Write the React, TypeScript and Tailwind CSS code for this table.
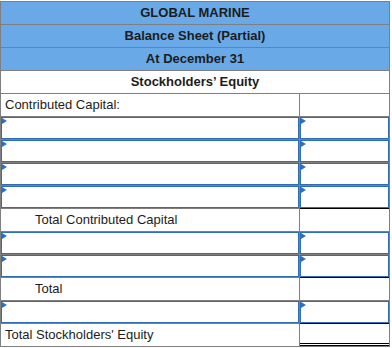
import React from "react";

type Row =
  | { kind: "label"; text: string; indent?: boolean; under?: "double" }
  | { kind: "input"; rule?: boolean };

const HEADERS = ["GLOBAL MARINE", "Balance Sheet (Partial)", "At December 31"];

const ROWS: Row[] = [
  { kind: "label", text: "Contributed Capital:" },
  { kind: "input" },
  { kind: "input" },
  { kind: "input" },
  { kind: "input", rule: true },
  { kind: "label", text: "Total Contributed Capital", indent: true },
  { kind: "input" },
  { kind: "input", rule: true },
  { kind: "label", text: "Total", indent: true },
  { kind: "input", rule: true },
  { kind: "label", text: "Total Stockholders' Equity", under: "double" },
];

function InputBox() {
  return (
    <div className="relative h-full w-full border border-[#2f6db6] bg-white">
      <svg className="absolute left-0 top-0" width="5" height="6" viewBox="0 0 5 6" aria-hidden="true">
        <path d="M0 0L5 3L0 6Z" fill="#2f6fc0" />
      </svg>
    </div>
  );
}

export default function App() {
  return (
    <div className="pt-px font-['Liberation_Sans',Arial,sans-serif] text-[13px] text-[#1c1c1c]">
      <div className="w-[390px] border-x border-t border-[#7f7f7f]">
        {HEADERS.map((h) => (
          <div
            key={h}
            className="flex h-[23px] items-center justify-center border-b border-[#7f7f7f] bg-[#69a9e7] font-bold"
          >
            {h}
          </div>
        ))}
        <div className="flex h-[23px] items-center justify-center border-b border-[#7f7f7f] bg-white font-bold">
          Stockholders’ Equity
        </div>

        {ROWS.map((r, i) =>
          r.kind === "input" ? (
            <div key={i} className="flex h-[23px]">
              <div className="w-[299px] border-r border-b border-[#7f7f7f]">
                <InputBox />
              </div>
              <div className={`flex-1 border-b ${r.rule ? "border-black" : "border-[#7f7f7f]"}`}>
                <InputBox />
              </div>
            </div>
          ) : (
            <div key={i} className="flex h-[23px]">
              <div
                className={`flex w-[299px] items-center border-r border-b border-[#7f7f7f] ${
                  r.indent ? "pl-[34px]" : "pl-[4px]"
                }`}
              >
                {r.text}
              </div>
              <div className="flex flex-1 flex-col justify-end border-b border-[#7f7f7f]">
                {r.under === "double" && <div className="h-[3px] border-y border-black" />}
              </div>
            </div>
          )
        )}
      </div>
    </div>
  );
}
